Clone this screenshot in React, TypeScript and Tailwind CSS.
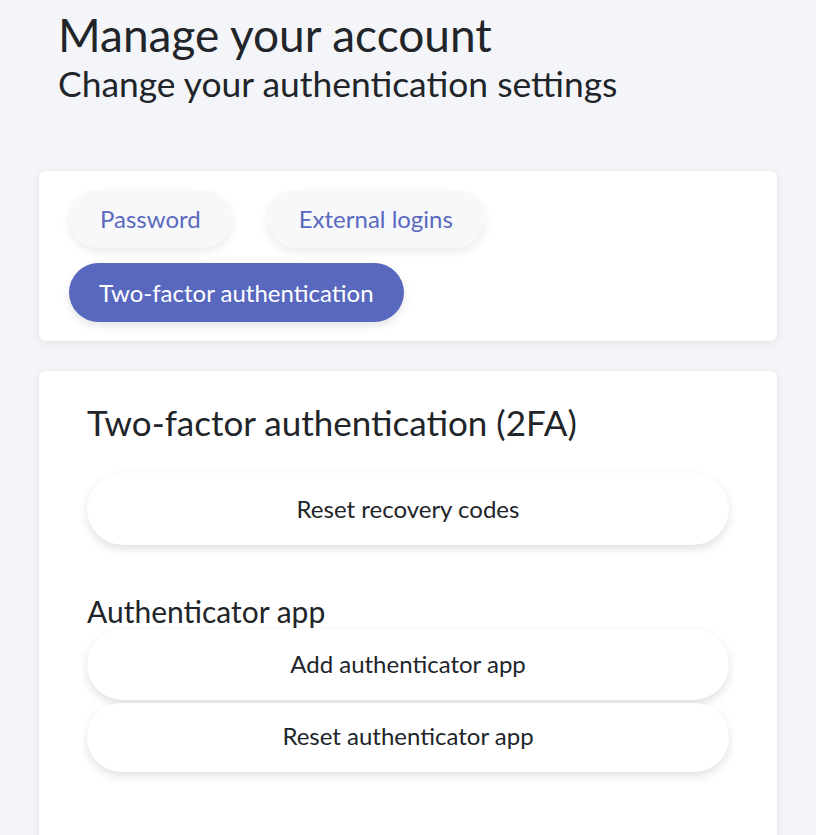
import React from "react";

export default function App() {
  return (
    <div className="min-h-screen bg-[#f4f5f9] font-['Lato','Noto_Sans',sans-serif] text-[#212529]">
      <div className="px-[39px] pb-10">
        <div className="pl-[19px] pt-[7px]">
          <h1 className="text-[46px] leading-[1.2] font-normal">Manage your account</h1>
          <h2 className="mt-[1px] text-[35.4px] leading-[42px] font-normal">Change your authentication settings</h2>
        </div>
        <div className="mt-[66px] rounded-lg bg-white pl-[30px] pr-[30px] pt-[19px] pb-[19px] shadow-[0_2px_8px_rgba(0,0,0,0.08)]">
          <div className="flex flex-wrap gap-x-[35px] gap-y-[15px]">
            <button className="h-[58px] rounded-full bg-[#f7f8fa] px-[31px] text-[24px] text-[#5a69bf] shadow-[0_4px_8px_rgba(0,0,0,0.08)]">Password</button>
            <button className="h-[58px] rounded-full bg-[#f7f8fa] px-[32px] text-[24px] text-[#5a69bf] shadow-[0_4px_8px_rgba(0,0,0,0.08)]">External logins</button>
            <button className="h-[59px] rounded-full bg-[#5868be] px-[30px] text-[24px] text-white shadow-[0_4px_8px_rgba(0,0,0,0.1)]">Two-factor authentication</button>
          </div>
        </div>
        <div className="mt-[30px] min-h-[500px] rounded-lg bg-white px-[48px] pt-[30px] shadow-[0_2px_8px_rgba(0,0,0,0.08)]">
          <h3 className="text-[35px] leading-[1.2] font-normal">Two-factor authentication (2FA)</h3>
          <button className="mt-[30px] flex h-[72px] w-full items-center justify-center rounded-full bg-white text-[24px] shadow-[0_4px_10px_rgba(0,0,0,0.12)]">Reset recovery codes</button>
          <h4 className="mt-[48px] text-[30px] leading-[1.2] font-normal">Authenticator app</h4>
          <div className="flex flex-col gap-[3px]">
            <button className="flex h-[71px] w-full items-center justify-center rounded-full bg-white pb-[2px] text-[24px] shadow-[0_4px_10px_rgba(0,0,0,0.12)]">Add authenticator app</button>
            <button className="flex h-[69px] w-full items-center justify-center rounded-full bg-white pb-[3px] text-[24px] shadow-[0_4px_10px_rgba(0,0,0,0.12)]">Reset authenticator app</button>
          </div>
        </div>
      </div>
    </div>
  );
}
